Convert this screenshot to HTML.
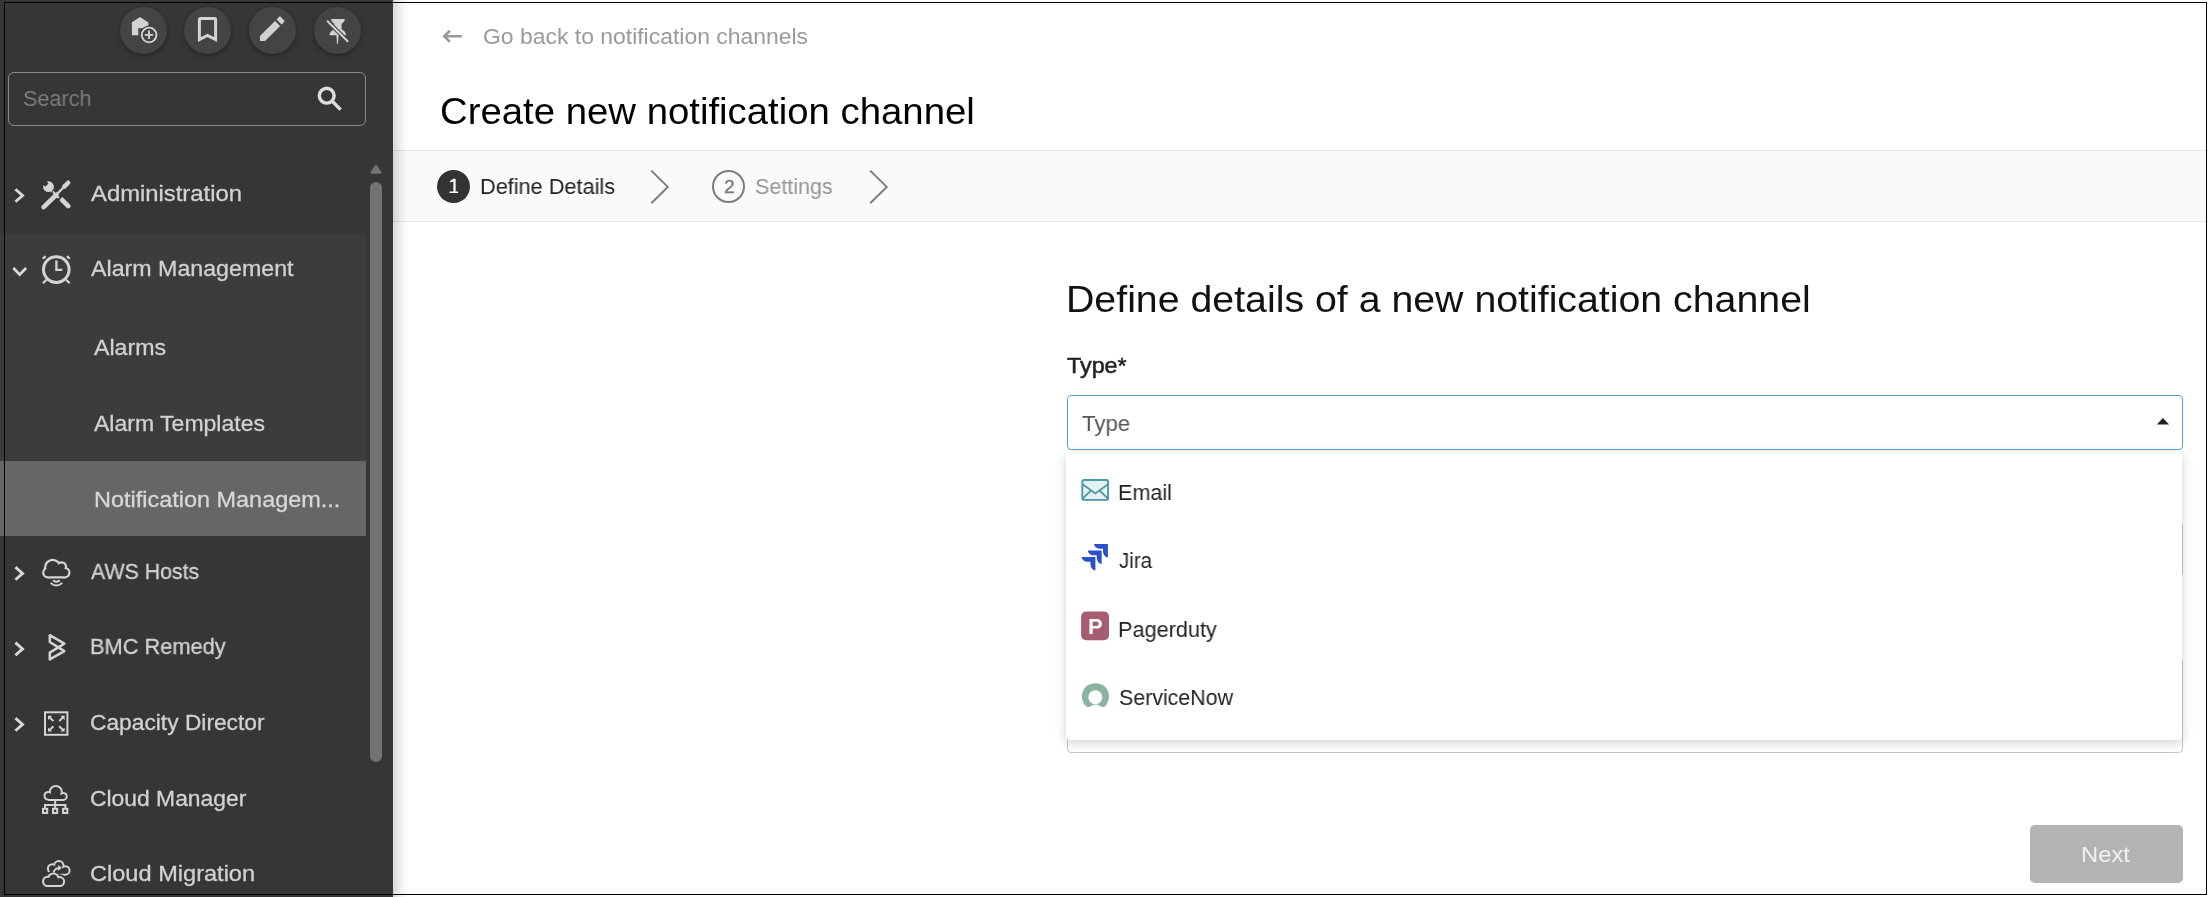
<!DOCTYPE html>
<html><head><meta charset="utf-8">
<style>
html,body{margin:0;padding:0;}
body{width:2208px;height:897px;overflow:hidden;position:relative;background:#fff;font-family:"Liberation Sans",sans-serif;}
.a{position:absolute;}
.t{position:absolute;white-space:nowrap;transform-origin:0 0;will-change:transform;font-family:"Liberation Sans",sans-serif;}
#side{position:absolute;left:0;top:0;width:393px;height:897px;background:#363636;}
.circ{position:absolute;width:47px;height:47px;border-radius:50%;background:#444;box-shadow:0 2px 5px rgba(0,0,0,0.35);}
#shadow{position:absolute;left:393px;top:0;width:15px;height:897px;background:linear-gradient(to right,rgba(0,0,0,0.15) 0%,rgba(0,0,0,0.11) 25%,rgba(0,0,0,0.045) 60%,rgba(0,0,0,0) 100%);}
svg{position:absolute;overflow:visible;}
</style></head><body>
<div id="side">
  <div class="circ" style="left:119.55px;top:7px"></div>
  <div class="circ" style="left:184.35px;top:7px"></div>
  <div class="circ" style="left:249.15px;top:7px"></div>
  <div class="circ" style="left:313.95px;top:7px"></div>
  <div class="a" style="left:8px;top:72px;width:358px;height:54px;box-sizing:border-box;border:1.5px solid #8a8a8a;border-radius:6px"></div>
  <div class="a" style="left:0;top:234px;width:366px;height:302px;background:#3c3c3c"></div>
  <div class="a" style="left:0;top:461px;width:366px;height:75px;background:#666666"></div>
  <div class="a" style="left:370px;top:182px;width:12px;height:580px;border-radius:6px;background:#737373"></div>
</div>
<!-- stepper bar -->
<div class="a" style="left:393px;top:150px;width:1815px;height:72px;box-sizing:border-box;background:#fafafa;border-top:1px solid #e3e3e3;border-bottom:1px solid #e3e3e3"></div>
<div class="a" style="left:437px;top:170px;width:33px;height:33px;border-radius:50%;background:#333"></div>
<div class="a" style="left:712px;top:170px;width:33px;height:33px;border-radius:50%;box-sizing:border-box;border:2px solid #7d7d7d"></div>
<!-- form underlying fields -->
<div class="a" style="left:1067px;top:522px;width:1116px;height:55px;box-sizing:border-box;border:1px solid #c8c8c8;border-radius:4px"></div>
<div class="a" style="left:1067px;top:658px;width:1116px;height:95px;box-sizing:border-box;border:1px solid #c8c8c8;border-radius:4px"></div>
<!-- type input -->
<div class="a" style="left:1067px;top:395px;width:1116px;height:55px;box-sizing:border-box;border:1.5px solid #5a9fd4;border-radius:4px;background:#fff"></div>
<!-- dropdown panel -->
<div class="a" style="left:1066px;top:452px;width:1116px;height:288px;background:#fff;border-radius:4px;box-shadow:0 3px 12px rgba(0,0,0,0.18)"></div>
<!-- next button -->
<div class="a" style="left:2030px;top:825px;width:153px;height:58px;border-radius:5px;background:#b3b3b3"></div>

<div id="shadow"></div>
<svg width="2208" height="897" viewBox="0 0 2208 897" style="left:0;top:0;position:absolute">
<g fill="#d2d2d2" stroke="none">
 <!-- house plus -->
 <path d="M131.9,22.3 L140,16.9 L148.4,22.6 L148.4,35.3 L142,35.3 L142,28.3 L138.3,28.3 L138.3,35.3 L131.9,35.3 Z"/>
 <circle cx="149.1" cy="35" r="9.4" fill="#444"/>
 <circle cx="149.1" cy="35" r="7.35" fill="none" stroke="#d2d2d2" stroke-width="1.9"/>
 <path d="M144.8,34.9 H153.2 M149,30.6 V39" stroke="#d2d2d2" stroke-width="1.9" fill="none"/>
 <!-- bookmark -->
 <path d="M199.4,39.5 V19.4 Q199.4,18.4 200.4,18.4 H214.6 Q215.6,18.4 215.6,19.4 V39.5 L207.5,35.4 Z" fill="none" stroke="#d2d2d2" stroke-width="3" stroke-linejoin="miter"/>
 <!-- pencil -->
 <g transform="translate(255.9,12.5) scale(1.36)">
  <path d="M3 17.25V21h3.75L17.81 9.94l-3.75-3.75L3 17.25zM20.71 7.04c.39-.39.39-1.02 0-1.41l-2.34-2.34c-.39-.39-1.020-.39-1.41 0l-1.83 1.83 3.75 3.75 1.83-1.83z"/>
 </g>
 <!-- pin off -->
 <path d="M331,19.1 H345 Q344.5,22.6 341.6,23.8 V29.6 Q345.8,31.5 346,35.2 H329.4 Q329.8,31.5 334.3,29.6 V23.8 Q331.4,22.6 331,19.1 Z"/>
 <path d="M336.4,35 H338.6 L338,43.5 Q337.5,44.6 337,43.5 Z"/>
 <line x1="327.6" y1="21.3" x2="347.6" y2="41.3" stroke="#444" stroke-width="4.2"/>
 <line x1="327.6" y1="21.3" x2="347.6" y2="41.3" stroke="#d2d2d2" stroke-width="2" stroke-linecap="round"/>
</g>
<!-- search -->
<g fill="none" stroke="#dedede" stroke-width="3.4">
 <circle cx="326.7" cy="95.7" r="7.4"/>
 <line x1="331.8" y1="100.8" x2="340.6" y2="109.6"/>
</g>
<!-- scrollbar up arrow -->
<path d="M371.6,172.6 L376,165.9 L380.4,172.6 Z" fill="#747474" stroke="#747474" stroke-width="2.2" stroke-linejoin="round"/>
<g fill="none" stroke="#dadada" stroke-width="2.8" stroke-linecap="butt" stroke-linejoin="miter">
 <!-- chevrons -->
 <path d="M15.4,189.2 L22.6,195.5 L15.4,201.8"/>
 <path d="M13.3,268 L19.7,274.6 L26.1,268"/>
 <path d="M15.4,567.1 L22.6,573.4 L15.4,579.7"/>
 <path d="M15.4,642.6 L22.6,648.9 L15.4,655.2"/>
 <path d="M15.4,718.1 L22.6,724.4 L15.4,730.7"/>
</g>
<!-- admin tools -->
<g fill="#d4d4d4">
 <circle cx="48.5" cy="186.7" r="5.4"/>
 <line x1="46.9" y1="185.1" x2="41" y2="179.2" stroke="#363636" stroke-width="4.6"/>
 <line x1="48.5" y1="186.7" x2="54" y2="192.2" stroke="#d4d4d4" stroke-width="3.6"/>
 <line x1="62" y1="199.8" x2="68.3" y2="206.1" stroke="#d4d4d4" stroke-width="4.7" stroke-linecap="round"/>
 <!-- screwdriver dark outline -->
 <line x1="43.6" y1="207.1" x2="56.5" y2="194.6" stroke="#363636" stroke-width="7.5" stroke-linecap="round"/>
 <path d="M52.8,190.2 L60.6,198.4 L56,196 Z" stroke="#363636" stroke-width="3"/>
 <line x1="43.6" y1="207.1" x2="56.5" y2="194.6" stroke="#d4d4d4" stroke-width="4.6" stroke-linecap="round"/>
 <path d="M53.3,190.8 L60,197.8 L57.5,196.6 L52.2,191.6 Z"/>
 <path d="M53,193.8 L57.6,198.4 L59.7,197.9 L53.6,191.2 Z"/>
 <line x1="56" y1="195" x2="63" y2="188" stroke="#d4d4d4" stroke-width="2.3"/>
 <line x1="64.3" y1="186.6" x2="68.2" y2="182.7" stroke="#d4d4d4" stroke-width="4.4" stroke-linecap="round"/>
 <path d="M61.8,188.6 L63.4,184.6 L66.2,187.4 Z"/>
</g>
<!-- alarm clock -->
<g fill="none" stroke="#d4d4d4" stroke-width="2.2">
 <circle cx="56.3" cy="269.6" r="12.8" stroke-width="3"/>
 <path d="M56.4,260.5 V269.8 H62.3" stroke-width="2.3"/>
 <line x1="42.8" y1="258.8" x2="45.6" y2="256.1"/>
 <line x1="66.8" y1="256.1" x2="69.8" y2="258.8"/>
 <line x1="42.9" y1="283.2" x2="46.5" y2="279.8"/>
 <line x1="66.1" y1="279.8" x2="69.7" y2="283.2"/>
</g>
<!-- aws cloud -->
<g fill="#d4d4d4"><circle cx="48" cy="572.6" r="5.90"/><circle cx="52.7" cy="567.5" r="8.70"/><circle cx="61.5" cy="566.8" r="5.60"/><circle cx="64.6" cy="572.6" r="5.90"/><polygon points="48.00,572.60 52.70,567.50 61.50,566.80 64.60,572.60 64.60,578.50 48.00,578.50"/></g>
<g fill="#363636"><circle cx="48" cy="572.6" r="3.70"/><circle cx="52.7" cy="567.5" r="6.50"/><circle cx="61.5" cy="566.8" r="3.40"/><circle cx="64.6" cy="572.6" r="3.70"/><polygon points="48.00,572.60 52.70,567.50 61.50,566.80 64.60,572.60 64.60,576.30 48.00,576.30"/></g>
<g fill="none" stroke="#d4d4d4" stroke-width="2" stroke-linecap="round">
 <path d="M53.7,580.7 A3.8,3.8 0 0 0 59.1,580.7"/>
 <path d="M51.2,583.4 A7.4,7.4 0 0 0 61.6,583.4"/>
</g>
<!-- bmc -->
<path d="M58.3,647.4 L49.8,652.6 L49.8,659.4 L64.3,651.1 L58.3,647.4 L64.3,643.7 L49.8,635.2 L49.8,642 Z" fill="none" stroke="#d4d4d4" stroke-width="2.5" stroke-linejoin="round"/>
<!-- capacity -->
<g fill="none" stroke="#d4d4d4" stroke-width="2">
 <rect x="45" y="712.3" width="22.4" height="22.5"/>
 <path d="M49,716.7 L53.4,721.1 M63.6,716.7 L59.2,721.1 M49,730.6 L53.4,726.2 M63.6,730.6 L59.2,726.2"/>
</g>
<g fill="#d4d4d4">
 <path d="M48,715.7 H52.2 L48,719.9 Z"/>
 <path d="M64.6,715.7 H60.4 L64.6,719.9 Z"/>
 <path d="M48,731.6 H52.2 L48,727.4 Z"/>
 <path d="M64.6,731.6 H60.4 L64.6,727.4 Z"/>
</g>
<!-- cloud manager -->
<g fill="#d4d4d4"><circle cx="48.4" cy="795.8" r="4.90"/><circle cx="55.8" cy="792" r="7.10"/><circle cx="63.2" cy="796.4" r="4.50"/><polygon points="48.40,795.80 55.80,792.00 63.20,796.40 63.20,800.90 48.40,800.90"/></g>
<g fill="#363636"><circle cx="48.4" cy="795.8" r="2.90"/><circle cx="55.8" cy="792" r="5.10"/><circle cx="63.2" cy="796.4" r="2.50"/><polygon points="48.40,795.80 55.80,792.00 63.20,796.40 63.20,798.90 48.40,798.90"/></g>
<g fill="none" stroke="#d4d4d4" stroke-width="2">
 <path d="M55.2,800.5 V808 M45,808 V805 H65.4 V808"/>
 <rect x="43" y="808.8" width="4.2" height="4.2"/>
 <rect x="53" y="808.8" width="4.2" height="4.2"/>
 <rect x="63.1" y="808.8" width="4.2" height="4.2"/>
</g>
<!-- cloud migration -->
<g fill="#d4d4d4"><circle cx="52.3" cy="868.6" r="5.40"/><circle cx="58.8" cy="865.8" r="5.70"/><circle cx="65.4" cy="870.4" r="5.20"/><polygon points="52.30,868.60 58.80,865.80 65.40,870.40 65.40,875.70 52.30,875.70"/></g>
<g fill="#363636"><circle cx="52.3" cy="868.6" r="3.40"/><circle cx="58.8" cy="865.8" r="3.70"/><circle cx="65.4" cy="870.4" r="3.20"/><polygon points="52.30,868.60 58.80,865.80 65.40,870.40 65.40,873.70 52.30,873.70"/></g>
<g fill="#363636"><circle cx="47.8" cy="881.4" r="7.50"/><circle cx="53.4" cy="878.6" r="8.00"/><circle cx="59.6" cy="881.6" r="7.30"/><polygon points="47.80,881.40 53.40,878.60 59.60,881.60 59.60,888.90 47.80,888.90"/></g>
<g fill="#d4d4d4"><circle cx="47.8" cy="881.4" r="5.70"/><circle cx="53.4" cy="878.6" r="6.20"/><circle cx="59.6" cy="881.6" r="5.50"/><polygon points="47.80,881.40 53.40,878.60 59.60,881.60 59.60,887.10 47.80,887.10"/></g>
<g fill="#363636"><circle cx="47.8" cy="881.4" r="3.70"/><circle cx="53.4" cy="878.6" r="4.20"/><circle cx="59.6" cy="881.6" r="3.50"/><polygon points="47.80,881.40 53.40,878.60 59.60,881.60 59.60,885.10 47.80,885.10"/></g>
<path d="M53.5,872.5 Q54.5,868.2 59.5,867.8" fill="none" stroke="#d4d4d4" stroke-width="1.8"/>
<path d="M58.3,865.5 L61.3,867.8 L58.5,870.3 Z" fill="#d4d4d4" stroke="#d4d4d4" stroke-width="0.8"/>

<!-- main: back arrow -->
<path d="M461.8,36.3 H444.5 M449.9,30.7 L444.2,36.3 L449.9,41.9" fill="none" stroke="#9a9a9a" stroke-width="2.6"/>
<!-- step 1 digit -->
<path d="M453.4,178.7 H455.6 V191.4 H458.1 V192.9 H449.6 V191.4 H453.4 V181.4 L450,182.6 V181 Z" fill="#fff"/>
<!-- stepper chevrons -->
<path d="M651.3,170.6 L667.8,186.9 L651.3,203.2" fill="none" stroke="#7d7d7d" stroke-width="2"/>
<path d="M870.2,170.6 L886.7,186.9 L870.2,203.2" fill="none" stroke="#7d7d7d" stroke-width="2"/>
<!-- dropdown triangle -->
<path d="M2156.7,424.6 L2162.9,417.9 L2169.1,424.6 Z" fill="#222"/>
<!-- email -->
<rect x="1082.3" y="480" width="25.8" height="19.9" rx="2" fill="#e5f2f4" stroke="#4e97a5" stroke-width="1.9"/>
<path d="M1082.6,484.3 L1095.3,493.4 L1108,484.3 M1082.6,498.6 L1090.6,490.8 M1108,498.6 L1100,490.8" fill="none" stroke="#4e97a5" stroke-width="1.8"/>
<!-- jira -->
<g fill="#2c50c8">
 <path id="jr" d="M1107.9,544.1 V557.7 C1105.2,557 1103,554.5 1103,551.3 V548.8 H1099.3 C1096.5,548.8 1094.3,546.8 1094.1,544.1 Z"/>
 <path d="M1101.65,550.55 V564.15 C1098.95,563.45 1096.75,560.95 1096.75,557.75 V555.25 H1093.05 C1090.25,555.25 1088.05,553.25 1087.85,550.55 Z"/>
 <path d="M1095.4,557 V570.6 C1092.7,569.9 1090.5,567.4 1090.5,564.2 V561.7 H1086.8 C1084,561.7 1081.8,559.7 1081.6,557 Z"/>
</g>
<!-- pagerduty -->
<rect x="1081.1" y="611.6" width="27.9" height="28.7" rx="5" fill="#a65d70"/>
<!-- servicenow -->
<path d="M1085.9,706.2 C1080.6,700.8 1080.8,691.5 1085.6,687 C1090.6,682 1100.3,682 1105.3,687 C1110.2,691.7 1110.3,700.8 1105.1,706.2 C1103.3,707.6 1101.3,706.9 1099.6,705.7 C1097.1,704 1093.9,704 1091.4,705.7 C1089.7,706.9 1087.7,707.6 1085.9,706.2 Z M1095.3,690.3 A6.9,6.9 0 1 0 1095.31,690.3 Z" fill="#8ab4a0" fill-rule="evenodd"/>
</svg>

<div class="t" style="left:23.04px;top:87.90px;font-size:22.5px;line-height:22.5px;font-weight:400;color:#7d7d7d;transform:scaleX(0.9609)">Search</div>
<div class="t" style="left:90.80px;top:182.80px;font-size:22.5px;line-height:22.5px;font-weight:400;color:#d2d2d2;transform:scaleX(1.0589);-webkit-text-stroke:0.3px #d2d2d2">Administration</div>
<div class="t" style="left:90.80px;top:258.00px;font-size:22.5px;line-height:22.5px;font-weight:400;color:#d2d2d2;transform:scaleX(1.0316);-webkit-text-stroke:0.3px #d2d2d2">Alarm Management</div>
<div class="t" style="left:94.00px;top:337.00px;font-size:22.5px;line-height:22.5px;font-weight:400;color:#d2d2d2;transform:scaleX(1.0290);-webkit-text-stroke:0.3px #d2d2d2">Alarms</div>
<div class="t" style="left:94.00px;top:412.90px;font-size:22.5px;line-height:22.5px;font-weight:400;color:#d2d2d2;transform:scaleX(1.0228);-webkit-text-stroke:0.3px #d2d2d2">Alarm Templates</div>
<div class="t" style="left:93.92px;top:489.00px;font-size:22.5px;line-height:22.5px;font-weight:400;color:#d8d8d8;transform:scaleX(1.0422);-webkit-text-stroke:0.3px #d8d8d8">Notification Managem...</div>
<div class="t" style="left:90.80px;top:560.90px;font-size:22.5px;line-height:22.5px;font-weight:400;color:#d2d2d2;transform:scaleX(0.9465);-webkit-text-stroke:0.3px #d2d2d2">AWS Hosts</div>
<div class="t" style="left:90.16px;top:635.90px;font-size:22.5px;line-height:22.5px;font-weight:400;color:#d2d2d2;transform:scaleX(0.9688);-webkit-text-stroke:0.3px #d2d2d2">BMC Remedy</div>
<div class="t" style="left:90.19px;top:711.90px;font-size:22.5px;line-height:22.5px;font-weight:400;color:#d2d2d2;transform:scaleX(1.0117);-webkit-text-stroke:0.3px #d2d2d2">Capacity Director</div>
<div class="t" style="left:90.18px;top:787.90px;font-size:22.5px;line-height:22.5px;font-weight:400;color:#d2d2d2;transform:scaleX(1.0163);-webkit-text-stroke:0.3px #d2d2d2">Cloud Manager</div>
<div class="t" style="left:90.15px;top:862.90px;font-size:22.5px;line-height:22.5px;font-weight:400;color:#d2d2d2;transform:scaleX(1.0477);-webkit-text-stroke:0.3px #d2d2d2">Cloud Migration</div>
<div class="t" style="left:482.96px;top:25.90px;font-size:22px;line-height:22px;font-weight:400;color:#9a9a9a;transform:scaleX(1.0423)">Go back to notification channels</div>
<div class="t" style="left:439.67px;top:93.80px;font-size:36px;line-height:36px;font-weight:400;color:#000000;transform:scaleX(1.0647)">Create new notification channel</div>
<div class="t" style="left:480.03px;top:175.90px;font-size:22px;line-height:22px;font-weight:400;color:#222222;transform:scaleX(0.9866)">Define Details</div>
<div class="t" style="left:755.22px;top:175.70px;font-size:22px;line-height:22px;font-weight:400;color:#959595;transform:scaleX(0.9769)">Settings</div>
<div class="t" style="left:1066.33px;top:281.90px;font-size:36px;line-height:36px;font-weight:400;color:#111111;transform:scaleX(1.0913)">Define details of a new notification channel</div>
<div class="t" style="left:1067.20px;top:355.40px;font-size:22.5px;line-height:22.5px;font-weight:400;color:#222222;transform:scaleX(1.0368);-webkit-text-stroke:0.5px #222222">Type*</div>
<div class="t" style="left:1082.30px;top:412.80px;font-size:22.5px;line-height:22.5px;font-weight:400;color:#555555;transform:scaleX(0.9875)">Type</div>
<div class="t" style="left:1118.04px;top:481.90px;font-size:22px;line-height:22px;font-weight:400;color:#222222;transform:scaleX(0.9817)">Email</div>
<div class="t" style="left:1119.00px;top:549.90px;font-size:22px;line-height:22px;font-weight:400;color:#222222;transform:scaleX(0.9306)">Jira</div>
<div class="t" style="left:1118.03px;top:619.10px;font-size:22px;line-height:22px;font-weight:400;color:#222222;transform:scaleX(0.9847)">Pagerduty</div>
<div class="t" style="left:1118.53px;top:686.50px;font-size:22px;line-height:22px;font-weight:400;color:#222222;transform:scaleX(0.9718)">ServiceNow</div>
<div class="t" style="left:2081.14px;top:844.20px;font-size:22px;line-height:22px;font-weight:400;color:#f2f2f2;transform:scaleX(1.0814)">Next</div>
<div class="t" style="left:723.68px;top:176.90px;font-size:19px;line-height:19px;font-weight:400;color:#7a7a7a;transform:scaleX(1.0222);-webkit-text-stroke:0.35px #7a7a7a">2</div>
<div class="t" style="left:1088.42px;top:615.90px;font-size:22px;line-height:22px;font-weight:700;color:#ffffff;transform:scaleX(0.9769)">P</div>

<div class="a" style="left:4px;top:2px;width:2203px;height:893px;box-sizing:border-box;border:1px solid #000"></div>
</body></html>
